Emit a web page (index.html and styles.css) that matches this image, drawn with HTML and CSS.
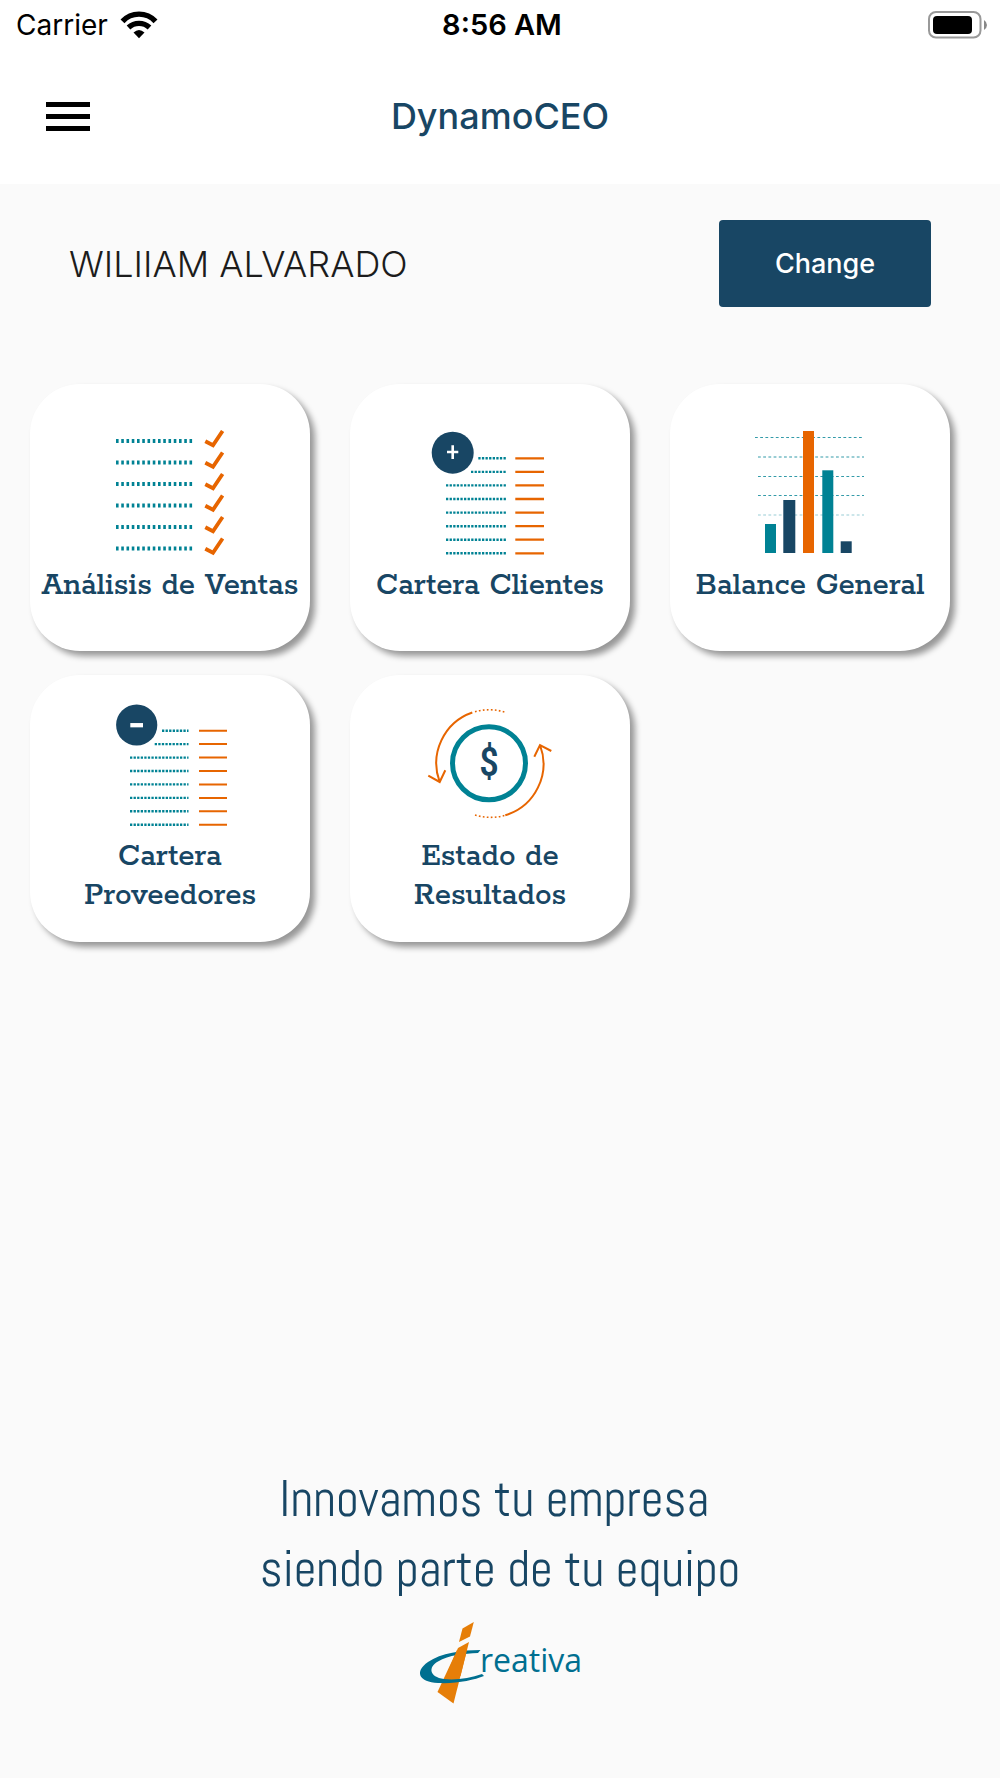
FILE: index.html
```html
<!DOCTYPE html>
<html lang="es">

<head>
  <meta charset="UTF-8" />
  <meta name="viewport" content="width=device-width, initial-scale=1.0" />
  <title>DynamoCEO</title>
  <link rel="stylesheet" href="styles.css">
</head>

<body>
  <header class="header">
    <!-- Status bar -->
    <div class="status">
      <div class="carrier">
        <span>Carrier</span>
        <svg width="38" height="28" viewBox="0 0 38 28" aria-hidden="true">
          <g fill="none" stroke="#000" stroke-width="5.400">
            <path d="M2.500 10.300 A22.500 22.500 0 0 1 35.500 10.300" />
            <path d="M8.500 16.500 A15.500 15.500 0 0 1 29.500 16.500" />
          </g>
          <path d="M13.500 21.500 Q19 16.500 24.500 21.500 L19 27.300 Z" />
        </svg>
      </div>
      <span class="time">8:56 AM</span>
      <svg class="battery" width="60" height="28" viewBox="0 0 60 28" aria-hidden="true">
        <rect x="1" y="1" width="51.500" height="25.500" rx="7" fill="none" stroke="#999" stroke-width="2" />
        <rect x="5" y="5" width="39" height="18" rx="4" />
        <path d="M56 9 Q59 11 59 14 Q59 17 56 19 Z" fill="#888" />
      </svg>
    </div>

    <!-- Navigation bar -->
    <div class="nav">
      <button class="menu" type="button" aria-label="Menu">
        <span></span>
        <span></span>
        <span></span>
      </button>
      <h1>DynamoCEO</h1>
    </div>
  </header>

  <main>
    <div class="user">
      <span class="name">WILIIAM ALVARADO</span>
      <button class="change" type="button">Change</button>
    </div>

    <nav class="cards">
      <a class="card" href="#ventas">
        <svg class="icon" viewBox="0 0 140 137" aria-hidden="true">
          <path d="M16 11 H93 M16 32.500 H93 M16 54 H93 M16 75.500 H93 M16 97 H93 M16 118.500 H93" fill="none" stroke="#008294" stroke-width="4" stroke-dasharray="2.600 2.650" />
          <path d="M105.300 11.300 L113 15.300 L122.600 1 M105.300 32.800 L113 36.800 L122.600 22.500 M105.300 54.300 L113 58.300 L122.600 44 M105.300 75.800 L113 79.800 L122.600 65.500 M105.300 97.300 L113 101.300 L122.600 87 M105.300 118.800 L113 122.800 L122.600 108.500" fill="none" stroke="#e76500" stroke-width="3.800" />
        </svg>
        <span>Análisis de Ventas</span>
      </a>

      <a class="card" href="#clientes">
        <svg class="icon" viewBox="0 0 140 137" aria-hidden="true">
          <circle cx="32.700" cy="22.700" r="21" fill="#184664" />
          <path d="M27 22 H38.300 M32.700 15.300 V29" stroke="#fff" stroke-width="2.600" />
          <path d="M58.300 28.300 H86 M51 41.900 H86 M26 55.400 H86 M26 69 H86 M26 82.600 H86 M26 96.200 H86 M26 109.700 H86 M26 123.300 H86" fill="none" stroke="#008294" stroke-width="2.400" stroke-dasharray="2.300 1.300" />
          <path d="M95.300 28.300 H124 M95.300 41.900 H124 M95.300 55.400 H124 M95.300 69 H124 M95.300 82.600 H124 M95.300 96.200 H124 M95.300 109.700 H124 M95.300 123.300 H124" stroke="#e76500" stroke-width="2.300" />
        </svg>
        <span>Cartera Clientes</span>
      </a>

      <a class="card" href="#balance">
        <svg class="icon" viewBox="0 0 140 137" aria-hidden="true">
          <g fill="none" stroke="#008294" stroke-dasharray="2.800 2.400">
            <path d="M15 7.500 H122 M18 46.500 H124 M18 65.500 H124" stroke-opacity=".8" />
            <path d="M18 27 H124" stroke-width="2" stroke-opacity=".4" />
            <path d="M18 85 H124" stroke-width="2" stroke-opacity=".2" />
          </g>
          <rect x="25" y="94" width="11" height="29" fill="#008294" />
          <rect x="43.300" y="70" width="12" height="53" fill="#184664" />
          <rect x="63" y="1" width="11" height="122" fill="#e76500" />
          <rect x="82.300" y="40.300" width="11" height="82.700" fill="#008294" />
          <rect x="100.700" y="111.300" width="11" height="11.700" fill="#184664" />
        </svg>
        <span>Balance General</span>
      </a>

      <a class="card" href="#proveedores">
        <svg class="icon" viewBox="0 0 140 137" aria-hidden="true">
          <circle cx="36.700" cy="24" r="20.600" fill="#184664" />
          <path d="M30.300 24.200 H43" stroke="#fff" stroke-width="4.300" />
          <path d="M62 29.700 H88.500 M54.700 43.100 H88.500 M30 56.600 H88.500 M30 70 H88.500 M30 83.400 H88.500 M30 96.900 H88.500 M30 110.300 H88.500 M30 123.700 H88.500" fill="none" stroke="#008294" stroke-width="2.400" stroke-dasharray="2.300 1.270" />
          <path d="M99 29.700 H127 M99 43.100 H127 M99 56.600 H127 M99 70 H127 M99 83.400 H127 M99 96.900 H127 M99 110.300 H127 M99 123.700 H127" stroke="#e76500" stroke-width="2" />
        </svg>
        <span>Cartera<br>Proveedores</span>
      </a>

      <a class="card" href="#resultados">
        <svg class="icon" viewBox="0 0 140 137" aria-hidden="true">
          <circle cx="69" cy="62.300" r="36.500" fill="none" stroke="#008294" stroke-width="5" />
          <g fill="none" stroke="#e76500" stroke-width="2">
            <path d="M52.300 11.500 A53.700 53.700 0 0 0 19.700 81 M8.300 74.700 L19.700 81 L25.300 69.300" />
            <path d="M85.300 114.300 A53.700 53.700 0 0 0 120 44 M114.300 55.700 L120 44 L131.300 50" />
            <path d="M55 10.700 A53.700 53.700 0 0 1 85.500 11.300" stroke-width="1.600" stroke-dasharray="1.700 2.300" />
            <path d="M55 114 A53.700 53.700 0 0 0 85.300 114.300" stroke-width="1.600" stroke-dasharray="1.700 2.300" />
          </g>
          <text class="dollar" x="69" y="75" text-anchor="middle">$</text>
        </svg>
        <span>Estado de<br>Resultados</span>
      </a>
    </nav>
  </main>

  <footer class="footer">
    <p>Innovamos tu empresa&nbsp;<br>siendo parte de tu equipo</p>
    <svg class="logo" viewBox="0 0 200 110" role="img" aria-label="Creativa">
      <path d="M62.500 18.500 L73.800 12 L70 26.500 L59 32 Z" fill="#e67e08" />
      <path d="M58 38 L69 32 L53.500 93.500 L37.500 82 Z" fill="#e67e08" />
      <path d="M80.500 40 C62 40 41 43 28 52 C14 62 19 72 38 73 C56 74 74 70 84 66 L82 64 C70 68 56 70.500 44 69 C29 67 28 57 38 51.500 C49 45 64 43.500 78 43 Z" fill="#006f90" />
      <path d="M57 40 L67 40 L60.500 66 L46 66 Z" fill="#e67e08" />
      <text class="brand" x="80" y="62">reativa</text>
    </svg>
  </footer>
</body>

</html>
```

FILE: styles.css
```css
* {
  box-sizing: border-box;
}

body {
  margin: 0;
  min-height: 100vh;
  display: flex;
  flex-direction: column;
  background: #fafafa;
  font-family: Inter, "Liberation Sans", sans-serif;
}

button {
  border: none;
  cursor: pointer;
  font-family: inherit;
}

/* Header */
.header {
  background: #fff;
}

.status {
  display: grid;
  grid-template-columns: 1fr auto 1fr;
  align-items: center;
  height: 50px;
  padding: 0 12px 0 16px;
  font-size: 28px;
  line-height: 32px;
  color: #000;
}

.carrier {
  display: flex;
  align-items: center;
  gap: 12px;
}

.time {
  font-size: 29px;
  font-weight: 600;
}

.battery {
  justify-self: end;
}

.nav {
  display: grid;
  grid-template-columns: 1fr auto 1fr;
  align-items: center;
  height: 134px;
  padding: 0 46px 2px;
}

.menu {
  display: flex;
  flex-direction: column;
  gap: 7px;
  width: 44px;
  padding: 0;
  background: none;
}

.menu span {
  height: 5px;
  background: #000;
}

.nav h1 {
  margin: 0;
  font-size: 36px;
  font-weight: 500;
  color: #184664;
}

/* User row */
.user {
  display: flex;
  justify-content: space-between;
  align-items: center;
  padding: 36px 69px 77px;
}

.name {
  font-size: 36px;
  font-weight: 300;
  color: #1c1c1c;
}

.change {
  width: 212px;
  height: 87px;
  border-radius: 4px;
  background: #184664;
  color: #fff;
  font-size: 27px;
  font-weight: 500;
}

/* Menu cards */
.cards {
  display: grid;
  grid-template-columns: repeat(3, 1fr);
  gap: 24px 40px;
  padding: 0 50px 0 30px;
}

.card {
  display: flex;
  flex-direction: column;
  align-items: center;
  justify-content: center;
  height: 267px;
  border-radius: 50px;
  background: #fff;
  box-shadow: 5px 5px 6px rgba(0, 0, 0, 0.4);
  color: #184664;
  font-family: Rokkitt, "Roboto Slab", "DejaVu Serif", serif;
  font-size: 33px;
  font-weight: 500;
  line-height: 39px;
  text-align: center;
  text-decoration: none;
}

.icon {
  width: 140px;
  height: 137px;
}

.dollar {
  font-family: "Roboto Condensed", Roboto, sans-serif;
  font-size: 40px;
  fill: #184664;
}

/* Footer */
.footer {
  display: flex;
  flex-direction: column;
  align-items: center;
  margin-top: auto;
  padding-bottom: 58px;
  color: #184664;
}

.footer p {
  margin: 0 0 6px;
  font-family: Abel, "Roboto Condensed", Roboto, sans-serif;
  font-size: 50px;
  line-height: 70px;
  text-align: center;
}

.logo {
  width: 200px;
  height: 110px;
}

.brand {
  font-family: "Open Sans", sans-serif;
  font-size: 32px;
  fill: #006f90;
}
```
